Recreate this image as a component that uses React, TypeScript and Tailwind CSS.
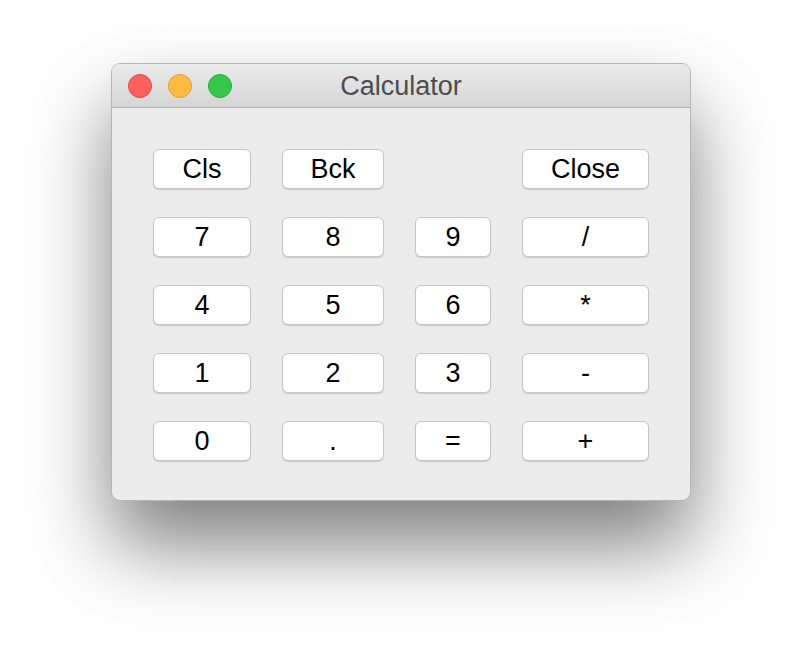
import React from "react";

const keys: string[][] = [
  ["Cls", "Bck", "", "Close"],
  ["7", "8", "9", "/"],
  ["4", "5", "6", "*"],
  ["1", "2", "3", "-"],
  ["0", ".", "=", "+"],
];

function Key({ label }: { label: string }) {
  if (!label) return <div />;
  return (
    <button className="h-[40px] rounded-[6px] bg-white border border-[#c6c6c6] shadow-[0_1px_1px_rgba(0,0,0,0.15)] text-[27px] leading-none text-black flex items-center justify-center">
      {label}
    </button>
  );
}

export default function App() {
  return (
    <div
      className="min-h-[660px] bg-white pt-[63px]"
      style={{ fontFamily: '"Helvetica Neue", "Liberation Sans", Arial, sans-serif' }}
    >
      <div className="mx-auto w-[580px] rounded-[9px] bg-[#ececec] border border-[#b5b5b5] overflow-hidden shadow-[0_44px_80px_rgba(0,0,0,0.5)]">
        {/* title bar */}
        <div className="relative h-[44px] flex items-center justify-center bg-gradient-to-b from-[#ebebeb] to-[#d5d5d5] border-b border-[#b1b1b1]">
          <div className="absolute left-[16px] top-[10px] flex gap-[16px]">
            <span className="w-[24px] h-[24px] rounded-full bg-[#fc605c] border border-[#de4a46]" />
            <span className="w-[24px] h-[24px] rounded-full bg-[#fdbc40] border border-[#dea034]" />
            <span className="w-[24px] h-[24px] rounded-full bg-[#34c84a] border border-[#27aa35]" />
          </div>
          <span className="text-[27px] text-[#4d4d4d] leading-none pt-[2px]">Calculator</span>
        </div>

        {/* keypad */}
        <div className="pt-[41px] pb-[39px] pl-[41px] grid grid-cols-[98px_102px_76px_127px] gap-x-[31px] gap-y-[28px]">
          {keys.flat().map((k, i) => (
            <Key key={i} label={k} />
          ))}
        </div>
      </div>
    </div>
  );
}
